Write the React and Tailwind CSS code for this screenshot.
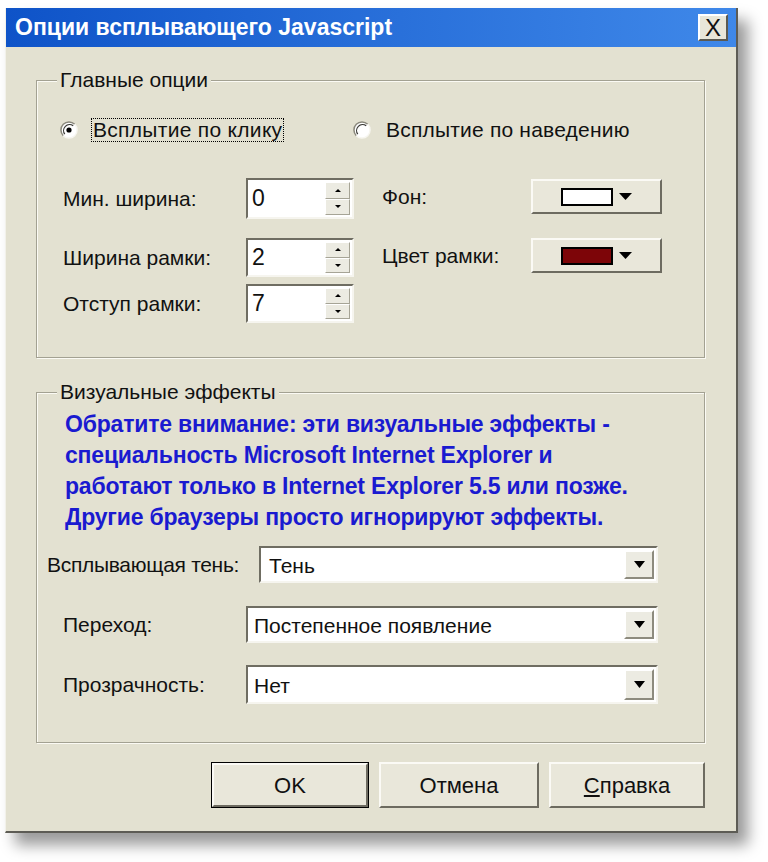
import React, { useState } from 'react';

// Маленький треугольник для спиннеров и выпадающих списков
function Arrow({ up = false, w = 12, h = 6 }) {
    return (
        <svg width={w} height={h} viewBox={`0 0 ${w} ${h}`}>
            {up
                ? <polygon points={`0,${h} ${w},${h} ${w / 2},0`} fill="#000" />
                : <polygon points={`0,0 ${w},0 ${w / 2},${h}`} fill="#000" />}
        </svg>
    );
}

function Radio({ checked }) {
    return (
        <svg width="18" height="18" viewBox="0 0 18 18">
            <circle cx="9" cy="9" r="8" fill="#fff" />
            <path d="M3.3 14.7 A8 8 0 0 1 14.7 3.3" fill="none" stroke="#8a887c" strokeWidth="1.5" />
            <path d="M4.8 13.2 A6 6 0 0 1 13.2 4.8" fill="none" stroke="#3a3a36" strokeWidth="1.2" />
            <path d="M14.7 3.3 A8 8 0 0 1 3.3 14.7" fill="none" stroke="#f7f6f0" strokeWidth="1.5" />
            {checked && <circle cx="9" cy="9" r="2.6" fill="#000" />}
        </svg>
    );
}

function Spinner({ value, h }) {
    return (
        <div className={`flex w-[108px] ${h} bg-white border-2 border-t-[#6f6d62] border-l-[#6f6d62] border-b-[#f6f5ef] border-r-[#f6f5ef]`}>
            <div className="flex-1 flex items-center pl-[4px] text-[23px] leading-none">{value}</div>
            <div className="flex flex-col w-[25px] my-[2px] mr-[2px] bg-[#ecebe2]">
                <div className="flex-1 flex items-center justify-center border border-t-white border-l-white border-r-[#a6a496] border-b-[#a6a496]">
                    <Arrow up w={6} h={3} />
                </div>
                <div className="flex-1 flex items-center justify-center border border-t-white border-l-white border-r-[#a6a496] border-b-[#a6a496]">
                    <Arrow w={6} h={3} />
                </div>
            </div>
        </div>
    );
}

function ColorButton({ color }) {
    return (
        <div className="flex items-center justify-center gap-[6px] w-[131px] h-[35px] bg-[#e9e7da] border-2 border-t-[#fbfaf5] border-l-[#fbfaf5] border-b-[#6d6b60] border-r-[#6d6b60]">
            <div className={`w-[52px] h-[18px] border-2 border-black ${color}`} />
            <Arrow w={13} h={7} />
        </div>
    );
}

function Combo({ value, w, h, pad }) {
    return (
        <div className={`flex ${w} ${h} bg-white border-2 border-t-[#6f6d62] border-l-[#6f6d62] border-b-[#f6f5ef] border-r-[#f6f5ef]`}>
            <div className={`flex-1 flex items-center ${pad} pt-[3px] text-[21px]`}>{value}</div>
            <div className="flex items-center justify-center w-[30px] my-[2px] mr-[2px] bg-[#ecebe2] border-2 border-t-white border-l-white border-r-[#8d8b7e] border-b-[#8d8b7e]">
                <Arrow w={11} h={7} />
            </div>
        </div>
    );
}

function GroupBox({ title, className, children }) {
    return (
        <div className={`relative border border-[#a3a192] shadow-[inset_1px_1px_0_#fbfaf4,1px_1px_0_#fbfaf4] ${className}`}>
            <div className="absolute -top-[14px] left-[20px] px-[3px] bg-[#e3e1d1] text-[21px] leading-[26px]">{title}</div>
            {children}
        </div>
    );
}

function DialogButton({ children, primary, w }) {
    return (
        <div className={`${w} h-[46px] ${primary ? 'border border-black' : ''}`}>
            <div className="h-full flex items-center justify-center bg-[#e9e7da] border-2 border-t-[#fbfaf5] border-l-[#fbfaf5] border-b-[#6d6b60] border-r-[#6d6b60] text-[22px]">
                {children}
            </div>
        </div>
    );
}

export default function App() {
    const [modo, setModo] = useState('clique');

    return (
        <div className="w-[768px] h-[862px] bg-white pt-[8px] pl-[5px] overflow-hidden" style={{ fontFamily: '"Liberation Sans", Arial, sans-serif' }}>
            <div className="w-[733px] h-[825px] flex flex-col bg-[#e3e1d1] text-[#111] border-l border-l-[#f2f1ea] border-r-2 border-r-[#5d5c55] border-b-2 border-b-[#5d5c55] shadow-[10px_12px_14px_rgba(0,0,0,0.4)]">
                {/* Заголовок окна */}
                <div className="h-[39px] flex items-center justify-between pl-[9px] pr-[8px] bg-gradient-to-r from-[#0e53c8] to-[#3f88e9]">
                    <span className="text-white font-bold text-[23px] leading-none">Опции всплывающего Javascript</span>
                    <div className="w-[30px] h-[27px] flex items-center justify-center bg-[#e8e6d9] border-2 border-t-white border-l-white border-b-[#5b5a52] border-r-[#5b5a52] text-[24px] leading-none">
                        X
                    </div>
                </div>

                <div className="flex flex-col pl-[30px]">
                    <GroupBox title="Главные опции" className="w-[669px] h-[278px] mt-[33px]">
                        <div className="flex items-center h-[24px] mt-[37px] pl-[23px] text-[21px]">
                            <div className="flex items-center w-[293px]" onClick={() => setModo('clique')}>
                                <Radio checked={modo === 'clique'} />
                                <span className="ml-[13px] px-[1px] leading-[22px] border border-dotted border-black tracking-[0.3px]">Всплытие по клику</span>
                            </div>
                            <div className="flex items-center" onClick={() => setModo('hover')}>
                                <Radio checked={modo === 'hover'} />
                                <span className="ml-[15px] tracking-[0.2px]">Всплытие по наведению</span>
                            </div>
                        </div>

                        <div className="flex text-[21px]">
                            <div className="flex flex-col pl-[26px] mt-[36px]">
                                <div className="flex items-center">
                                    <span className="w-[183px]">Мин. ширина:</span>
                                    <Spinner value="0" h="h-[41px]" />
                                </div>
                                <div className="flex items-center mt-[19px]">
                                    <span className="w-[183px]">Ширина рамки:</span>
                                    <Spinner value="2" h="h-[39px]" />
                                </div>
                                <div className="flex items-center mt-[7px]">
                                    <span className="w-[183px]">Отступ рамки:</span>
                                    <Spinner value="7" h="h-[39px]" />
                                </div>
                            </div>
                            <div className="flex flex-col ml-[28px] mt-[37px]">
                                <div className="flex items-center">
                                    <span className="w-[149px]">Фон:</span>
                                    <ColorButton color="bg-white" />
                                </div>
                                <div className="flex items-center mt-[24px]">
                                    <span className="w-[149px]">Цвет рамки:</span>
                                    <ColorButton color="bg-[#7d0508]" />
                                </div>
                            </div>
                        </div>
                    </GroupBox>

                    <GroupBox title="Визуальные эффекты" className="w-[669px] h-[351px] mt-[34px]">
                        <p className="pt-[16px] pl-[28px] pr-[10px] text-[#1a1ad0] font-bold text-[23px] leading-[31px] tracking-[-0.2px]">
                            Обратите внимание: эти визуальные эффекты -<br />
                            специальность Microsoft Internet Explorer и<br />
                            работают только в Internet Explorer 5.5 или позже.<br />
                            Другие браузеры просто игнорируют эффекты.
                        </p>

                        <div className="flex items-center mt-[13px] pl-[10px] text-[21px]">
                            <span className="w-[212px] tracking-[-0.3px]">Всплывающая тень:</span>
                            <Combo value="Тень" w="w-[399px]" h="h-[37px]" pad="pl-[8px]" />
                        </div>
                        <div className="flex items-center mt-[23px] pl-[26px] text-[21px]">
                            <span className="w-[183px]">Переход:</span>
                            <Combo value="Постепенное появление" w="w-[412px]" h="h-[37px]" pad="pl-[6px]" />
                        </div>
                        <div className="flex items-center mt-[22px] pl-[26px] text-[21px]">
                            <span className="w-[183px]">Прозрачность:</span>
                            <Combo value="Нет" w="w-[412px]" h="h-[39px]" pad="pl-[6px]" />
                        </div>
                    </GroupBox>

                    {/* Кнопки диалога */}
                    <div className="flex justify-end gap-[10px] mt-[19px] pr-[31px]">
                        <DialogButton primary w="w-[158px]">OK</DialogButton>
                        <DialogButton w="w-[160px]">Отмена</DialogButton>
                        <DialogButton w="w-[156px]"><span><u>С</u>правка</span></DialogButton>
                    </div>
                </div>
            </div>
        </div>
    );
}
